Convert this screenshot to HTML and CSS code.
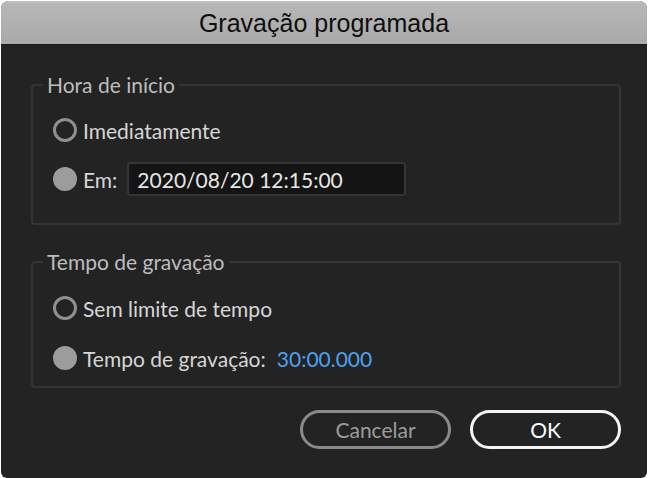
FILE: index.html
```html
<!DOCTYPE html>
<html lang="pt">
<head>
<meta charset="utf-8">
<title>Gravação programada</title>
<link rel="stylesheet" href="styles.css">
</head>
<body>
<div class="window">
  <header class="titlebar">
    <h1 class="title">Gravação programada</h1>
  </header>
  <main class="content">
    <fieldset class="group group-start">
      <legend class="legend">Hora de início</legend>
      <div class="row">
        <span class="radio"></span>
        <span class="label">Imediatamente</span>
      </div>
      <div class="row">
        <span class="radio radio-on"></span>
        <span class="label">Em:</span>
        <span class="input">2020/08/20 12:15:00</span>
      </div>
    </fieldset>
    <fieldset class="group group-duration">
      <legend class="legend">Tempo de gravação</legend>
      <div class="row">
        <span class="radio"></span>
        <span class="label">Sem limite de tempo</span>
      </div>
      <div class="row">
        <span class="radio radio-on"></span>
        <span class="label">Tempo de gravação:</span>
        <span class="value">30:00.000</span>
      </div>
    </fieldset>
    <div class="buttons">
      <button class="btn btn-cancel">Cancelar</button>
      <button class="btn btn-ok">OK</button>
    </div>
  </main>
</div>
</body>
</html>
```

FILE: styles.css
```css
html, body {
  margin: 0;
  padding: 0;
  background: #ffffff;
}
body {
  width: 648px;
  height: 478px;
  overflow: hidden;
}
.window {
  box-sizing: border-box;
  width: 646px;
  height: 477px;
  margin: 1px 0 0 1px;
  background: #232323;
  border-radius: 8px 8px 6px 6px;
  overflow: hidden;
  display: flex;
  flex-direction: column;
  font-family: Lato, "Open Sans", sans-serif;
}
.titlebar {
  height: 43px;
  flex: none;
  background: linear-gradient(#c6c6c6 0, #b7b7b7 3px, #a9a9a9 100%);
  border-bottom: 1px solid #1a1a1a;
  display: flex;
  align-items: center;
  justify-content: center;
}
.title {
  margin: 0;
  font-family: "Liberation Sans", Arial, sans-serif;
  font-weight: normal;
  font-size: 25px;
  color: #0e0e0e;
  line-height: 1;
  padding-top: 2px;
}
.content {
  display: flex;
  flex-direction: column;
  padding: 28px 26px 0 30px;
}
.group {
  margin: 0;
  border: 2px solid #353535;
  border-radius: 4px;
  padding: 16px 20px 27px 20px;
  display: flex;
  flex-direction: column;
  gap: 15px;
}
.group-duration {
  margin-top: 25px;
  padding-top: 17px;
  padding-bottom: 11px;
  gap: 16px;
}
.legend {
  padding: 0 4px;
  margin-left: -10px;
  font-size: 21px;
  color: #bdbdbd;
  line-height: 24px;
}
.row {
  display: flex;
  align-items: center;
  height: 34px;
}
.radio {
  box-sizing: border-box;
  width: 24px;
  height: 24px;
  border-radius: 50%;
  border: 3px solid #8f8f8f;
  margin-right: 6px;
  flex: none;
}
.radio-on {
  background: #9c9c9c;
  border-color: #9c9c9c;
}
.label {
  font-size: 21px;
  color: #d6d6d6;
}
.input {
  box-sizing: border-box;
  margin-left: 10px;
  width: 279px;
  height: 34px;
  background: #141414;
  border: 2px solid #353535;
  border-radius: 4px;
  padding: 0 8px;
  display: flex;
  align-items: center;
  font-size: 21px;
  color: #e6e6e6;
}
.value {
  margin-left: 11px;
  font-size: 21px;
  color: #4ba2f0;
}
.buttons {
  display: flex;
  justify-content: flex-end;
  gap: 19px;
  margin-top: 22px;
}
.btn {
  box-sizing: border-box;
  width: 151px;
  height: 39px;
  border-radius: 20px;
  background: transparent;
  font-family: Lato, "Open Sans", sans-serif;
  font-size: 21px;
  padding: 0;
}
.btn-cancel {
  border: 3px solid #8a8a8a;
  color: #9c9c9c;
}
.btn-ok {
  border: 3px solid #f4f4f4;
  color: #ffffff;
}
```
